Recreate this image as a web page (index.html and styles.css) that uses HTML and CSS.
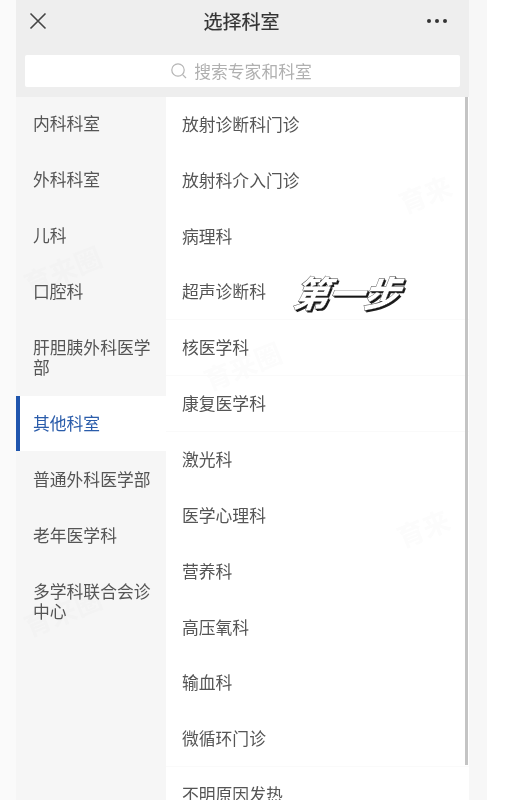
FILE: index.html
```html
<!DOCTYPE html>
<html lang="zh">
<head>
<meta charset="utf-8">
<title>选择科室</title>
<link rel="stylesheet" href="styles.css">
</head>
<body>
<div class="page">
  <div class="gutter-left"></div>
  <main class="app">
    <header class="top">
      <div class="nav">
        <svg class="close" width="20" height="20" viewBox="0 0 20 20"><path d="M2.5 2.5L17.5 17.5M17.5 2.5L2.5 17.5" fill="none" stroke="#444" stroke-width="1.6"/></svg>
        <h1 class="title">选择科室</h1>
        <svg class="more" width="22" height="6" viewBox="0 0 22 6"><circle cx="3" cy="3" r="2" fill="#333"/><circle cx="11" cy="3" r="2" fill="#333"/><circle cx="19" cy="3" r="2" fill="#333"/></svg>
      </div>
      <div class="search">
        <svg width="18" height="18" viewBox="0 0 18 18"><circle cx="8" cy="8" r="6.2" fill="none" stroke="#b5b5b5" stroke-width="1.2"/><path d="M12.6 12.6L16 16" stroke="#b5b5b5" stroke-width="1.2"/></svg>
        <span>搜索专家和科室</span>
      </div>
    </header>
    <div class="body">
      <nav class="side">
        <div class="side-item">内科科室</div>
        <div class="side-item">外科科室</div>
        <div class="side-item">儿科</div>
        <div class="side-item">口腔科</div>
        <div class="side-item side-tall">肝胆胰外科医学部</div>
        <div class="side-item side-active">其他科室</div>
        <div class="side-item">普通外科医学部</div>
        <div class="side-item">老年医学科</div>
        <div class="side-item side-tall">多学科联合会诊中心</div>
      </nav>
      <section class="list">
        <div class="row">放射诊断科门诊</div>
        <div class="row">放射科介入门诊</div>
        <div class="row">病理科</div>
        <div class="row row-line">超声诊断科</div>
        <div class="row row-line">核医学科</div>
        <div class="row row-line">康复医学科</div>
        <div class="row">激光科</div>
        <div class="row">医学心理科</div>
        <div class="row">营养科</div>
        <div class="row">高压氧科</div>
        <div class="row">输血科</div>
        <div class="row row-line">微循环门诊</div>
        <div class="row">不明原因发热</div>
        <div class="scrollbar"></div>
      </section>
    </div>
    <span class="wm wm-a">育来</span>
    <span class="wm wm-b">育来圈</span>
    <span class="wm wm-c">育来圈</span>
    <span class="wm wm-d">育来</span>
    <span class="wm wm-e">育来圈</span>
  </main>
  <div class="gutter-right"></div>
  <div class="step">第一步</div>
</div>
</body>
</html>
```
FILE: styles.css
```css
* { box-sizing: border-box; }
html, body { margin: 0; height: 100%; background: #fff; overflow: hidden; }
body { font-family: "Noto Sans CJK SC", "Liberation Sans", sans-serif; color: #555; }
.page { position: relative; display: flex; width: 510px; height: 800px; overflow: hidden; filter: blur(0.6px); }
.gutter-left { width: 16px; background: #fafafa; }
.gutter-right { width: 18px; background: #f7f7f7; }
.app { position: relative; width: 453px; height: 800px; display: flex; flex-direction: column; background: #f6f6f6; overflow: hidden; }
.top { height: 97px; background: #eeeeee; padding: 0 9px; display: flex; flex-direction: column; }
.nav { height: 56px; padding: 0 12px 14px 3px; display: grid; grid-template-columns: 1fr auto 1fr; align-items: center; }
.close { display: block; }
.more { justify-self: end; }
.title { margin: 0 0 0 7px; font-size: 19px; font-weight: 400; color: #333; line-height: 26px; -webkit-text-stroke: 0.2px #333; }
.search { height: 32px; width: 435px; margin-top: -1px; background: #fff; border-radius: 2px; display: flex; align-items: center; justify-content: center; gap: 6px; color: #b0b0b0; font-size: 16.8px; padding-right: 3px; }
.body { flex: 1; display: flex; min-height: 0; }
.side { position: relative; z-index: 1; width: 150px; margin-top: -1px; }
.side-item { height: 55.8px; padding: 0 13px 1px 17px; display: flex; align-items: center; font-size: 16.8px; line-height: 20px; color: #555; }
.side-tall { height: 76.5px; }
.side-active { background: #fff; color: #2a5caa; border-left: 4px solid #1f55ad; padding-left: 13px; }
.list { position: relative; width: 303px; background: #fff; }
.row { position: relative; z-index: 1; height: 55.85px; padding: 0 0 2px 16px; display: flex; align-items: center; font-size: 16.8px; color: #555; }
.row-line { border-bottom: 1px solid #fafafa; }
.scrollbar { position: absolute; z-index: 2; top: 0; right: 1px; width: 3px; height: 668px; background: #c4c4c4; }
.wm { position: absolute; z-index: 0; font-size: 27px; font-weight: 700; color: #fcfcfc; transform: rotate(-22deg); line-height: 1; white-space: nowrap; pointer-events: none; }
.wm-a { left: 382px; top: 180px; }
.wm-b { left: 6px; top: 256px; color: #f3f3f3; }
.wm-c { left: 186px; top: 352px; }
.wm-d { left: 380px; top: 514px; }
.wm-e { left: 6px; top: 598px; color: #f3f3f3; }
.step { position: absolute; left: 294px; top: 270px; font-size: 36px; line-height: 42px; font-weight: 900; font-style: italic; color: #fff; letter-spacing: -1px; -webkit-text-stroke: 0.4px #444; text-shadow: 1px 1px 0 #111, 2px 2px 0 #222, -1px -1px 0 #fff; transform: skewX(-8deg); }
```
